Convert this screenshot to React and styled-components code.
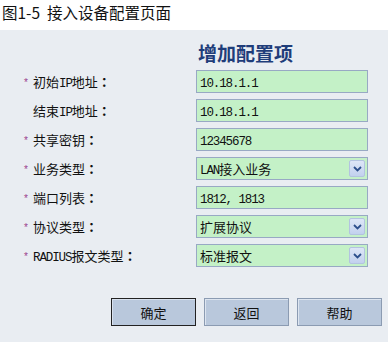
import React from 'react'
import styled, { createGlobalStyle } from 'styled-components'

const GlobalStyle = createGlobalStyle`
  body {
    margin: 0;
    background: #fff;
    font-family: "Noto Sans CJK SC", "Liberation Sans", sans-serif;
    color: #111;
  }
`

const fields = [
  { label: '初始IP地址', value: '10.18.1.1', required: true },
  { label: '结束IP地址', value: '10.18.1.1' },
  { label: '共享密钥', value: '12345678', required: true },
  { label: '业务类型', value: 'LAN接入业务', required: true, select: true },
  { label: '端口列表', value: '1812, 1813', required: true },
  { label: '协议类型', value: '扩展协议', required: true, select: true },
  { label: 'RADIUS报文类型', value: '标准报文', required: true, select: true },
]

// latin runs get the narrow half-width look of the original page font
const Mixed = ({ text }) =>
  text.split(/([\x20-\x7e]+)/).filter(Boolean).map((part, i) =>
    /^[\x20-\x7e]+$/.test(part) ? <Latin key={i}>{part}</Latin> : <span key={i}>{part}</span>
  )

const Chevron = () => (
  <svg width="9" height="6" viewBox="0 0 9 6">
    <path d="M1 1 L4.5 4.5 L8 1" fill="none" stroke="#2c4f8c" strokeWidth="1.8" />
  </svg>
)

const App = () => {
  return (
    <>
      <GlobalStyle />
      <Caption>图1-5&nbsp;&nbsp;接入设备配置页面</Caption>
      <Panel>
        <Form>
          <Heading>增加配置项</Heading>
          {fields.map((f) => (
            <React.Fragment key={f.label}>
              <Label>
                <Star>{f.required ? '*' : ''}</Star>
                <LabelText>
                  <Mixed text={f.label} />
                  <Colon>：</Colon>
                </LabelText>
              </Label>
              <Field>
                <Value><Mixed text={f.value} /></Value>
                {f.select && <DropButton><Chevron /></DropButton>}
              </Field>
            </React.Fragment>
          ))}
        </Form>
        <Buttons>
          <Button $focused>确定</Button>
          <Button>返回</Button>
          <Button>帮助</Button>
        </Buttons>
      </Panel>
    </>
  )
}

export default App

const Caption = styled.div`
  height: 30px;
  padding-left: 2px;
  font-size: 15.5px;
  line-height: 24px;
  color: #111;
`

const Panel = styled.div`
  height: 312px;
  margin-right: 2px;
  background: #e9edf2;
  box-sizing: border-box;
  padding-top: 11px;
`

const Form = styled.div`
  display: grid;
  grid-template-columns: 196px 172px;
  grid-auto-rows: 23px;
  row-gap: 6px;
`

const Heading = styled.div`
  grid-column: 2;
  height: 35px;
  padding-left: 2px;
  font-size: 19px;
  font-weight: bold;
  line-height: 24px;
  color: #1f3d7a;
`

const Label = styled.div`
  display: flex;
  align-items: center;
  padding-left: 24px;
  font-size: 13px;
  color: #111;
`

const LabelText = styled.span`
  white-space: nowrap;
`

const Star = styled.span`
  width: 9px;
  padding-top: 2px;
  font-size: 10px;
  color: #9a3d8e;
  font-family: "Liberation Sans", sans-serif;
`

const Colon = styled.span`
  font-family: "Noto Sans CJK TC", sans-serif;
  font-weight: bold;
`

const Latin = styled.span`
  font-family: "Liberation Mono", monospace;
  font-size: 12.5px;
  letter-spacing: -1.1px;
`

const Field = styled.div`
  display: flex;
  align-items: center;
  box-sizing: border-box;
  border: 1px solid #98a9c4;
  background: #c4f1c7;
  padding: 0 2px 0 3px;
`

const Value = styled.div`
  flex: 1;
  font-size: 13px;
  color: #111;
`

const DropButton = styled.div`
  width: 16px;
  height: 17px;
  display: flex;
  align-items: center;
  justify-content: center;
  box-sizing: border-box;
  border: 1px solid #b3c3e0;
  border-radius: 2px;
  background: linear-gradient(#dde6f7, #c2d1ee);
`

const Buttons = styled.div`
  display: flex;
  gap: 8px;
  padding-left: 111px;
  margin-top: 31px;
`

const Button = styled.div`
  width: 85px;
  height: 28px;
  box-sizing: border-box;
  display: flex;
  align-items: center;
  justify-content: center;
  font-size: 13px;
  color: #111;
  background: #b9c8dc;
  border: 1px solid ${(p) => (p.$focused ? '#222' : '#8b9bb2')};
  box-shadow: ${(p) => (p.$focused ? 'inset 1px 1px 0 #d8e1ee' : 'inset 1px 1px 0 #dde5f0')};
`
